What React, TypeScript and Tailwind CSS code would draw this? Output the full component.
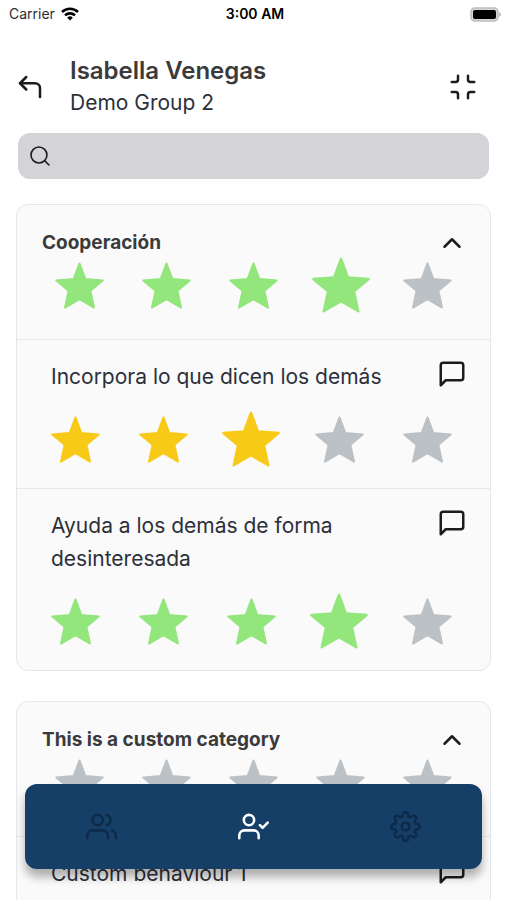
import React, { useState } from 'react';
import {
  FiChevronDown,
  FiChevronUp,
  FiCornerUpLeft,
  FiMessageSquare,
  FiMinimize,
  FiSearch,
  FiSettings,
  FiUserCheck,
  FiUsers,
} from 'react-icons/fi';

interface Behaviour {
  name: string;
  score: number;
}

interface Category {
  name: string;
  score: number;
  behaviours: Behaviour[];
}

const categories: Category[] = [
  {
    name: 'Cooperación',
    score: 4,
    behaviours: [
      { name: 'Incorpora lo que dicen los demás', score: 3 },
      { name: 'Ayuda a los demás de forma desinteresada', score: 4 },
    ],
  },
  {
    name: 'This is a custom category',
    score: 0,
    behaviours: [{ name: 'Custom behaviour 1', score: 0 }],
  },
];

const starColor = (position: number, score: number) => {
  if (position > score) return 'text-[#bbc1c5]';
  return score === 3 ? 'text-[#f8ca18]' : 'text-[#92e67b]';
};

interface StarsProps {
  label: string;
  initial: number;
}

const Stars: React.FC<StarsProps> = ({ label, initial }) => {
  const [score, setScore] = useState(initial);

  return (
    <div className="grid grid-cols-5" role="group" aria-label={label}>
      {[1, 2, 3, 4, 5].map((position) => (
        <button
          key={position}
          type="button"
          aria-label={`${position} / 5`}
          aria-pressed={position === score}
          onClick={() => setScore(position)}
          className={`flex h-14 items-center justify-center ${starColor(position, score)}`}
        >
          <svg
            viewBox="0 0 174 168"
            className={position === score ? 'h-14 w-[58px]' : 'h-[47px] w-[49px]'}
            fill="currentColor"
            stroke="currentColor"
            strokeWidth="7"
            strokeLinejoin="round"
          >
            <path d="M87 5 L108 61 L170 66 L126 103 L139 163 L87 133 L35 163 L48 103 L4 66 L66 61 Z" />
          </svg>
        </button>
      ))}
    </div>
  );
};

const BehaviourRow: React.FC<{ behaviour: Behaviour }> = ({ behaviour }) => (
  <li className="border-t border-[#e6e8ea] pt-[19px] pb-[21px]">
    <div className="flex items-start justify-between pl-[34px] pr-[23px]">
      <p className="max-w-[340px] pt-px text-[21px] leading-[33px] text-[#2b303b]">{behaviour.name}</p>
      <button type="button" aria-label="Comment" className="text-[#1c1c1e]">
        <FiMessageSquare size={30} />
      </button>
    </div>
    <div className="mt-[18px] pl-[14px] pr-[19px]">
      <Stars label={behaviour.name} initial={behaviour.score} />
    </div>
  </li>
);

const CategoryCard: React.FC<{ category: Category }> = ({ category }) => {
  const [open, setOpen] = useState(true);

  return (
    <section className="rounded-xl border border-[#e6e7e9] bg-[#fafafa]">
      <div className="pt-[23px] pb-[26px]">
        <div className="flex h-[29px] items-center justify-between pl-[25px] pr-[23px]">
          <h2 className="text-[19px] leading-7 font-bold text-[#3a3a3c]">{category.name}</h2>
          <button
            type="button"
            aria-label={category.name}
            aria-expanded={open}
            onClick={() => setOpen(!open)}
            className="text-[#1c1c1e]"
          >
            {open ? <FiChevronUp size={30} /> : <FiChevronDown size={30} />}
          </button>
        </div>
        <div className="px-[19px]">
          <Stars label={category.name} initial={category.score} />
        </div>
      </div>
      {open && (
        <ul>
          {category.behaviours.map((behaviour) => (
            <BehaviourRow key={behaviour.name} behaviour={behaviour} />
          ))}
        </ul>
      )}
    </section>
  );
};

const StatusBar: React.FC = () => (
  <div className="grid h-7 grid-cols-3 items-center pl-[9px] pr-[6px] text-sm text-black">
    <div className="flex items-center gap-[6px]">
      <span className="text-[#2c2c2e]">Carrier</span>
      <svg viewBox="0 0 18 14" className="h-[14px] w-[18px]" fill="none" stroke="currentColor" strokeWidth="2.6">
        <path d="M1 5 A11.5 11.5 0 0 1 17 5" />
        <path d="M4 8.4 A7.2 7.2 0 0 1 14 8.4" />
        <path d="M9 13.6 L6.2 10.7 A4 4 0 0 1 11.8 10.7 Z" fill="currentColor" stroke="none" />
      </svg>
    </div>
    <span className="text-center font-semibold">3:00 AM</span>
    <svg viewBox="0 0 31 15" className="h-[15px] w-[31px] justify-self-end">
      <rect x="1" y="1" width="27" height="13" rx="4" fill="#d6d6d6" stroke="#bdbdbd" strokeWidth="1.6" />
      <rect x="3" y="3" width="23" height="9" rx="2" fill="#000" />
      <path d="M29.2 5.2 Q31 6 31 7.5 Q31 9 29.2 9.8 Z" fill="#b4b4b4" />
    </svg>
  </div>
);

const App: React.FC = () => {
  const [query, setQuery] = useState('');

  return (
    <div className="relative flex h-screen flex-col overflow-hidden bg-white font-['Inter','Liberation_Sans',sans-serif]">
      <StatusBar />

      <header className="flex items-center pt-[27px] pl-[15px] pr-[29px]">
        <button type="button" aria-label="Back" className="text-[#1c1c1e]">
          <FiCornerUpLeft size={30} />
        </button>
        <div className="ml-[25px] flex-1">
          <h1 className="text-2xl leading-8 font-semibold text-[#3a3a3c]">Isabella Venegas</h1>
          <p className="text-[21px] leading-8 text-[#2b303b]">Demo Group 2</p>
        </div>
        <button type="button" aria-label="Collapse all" className="text-[#1c1c1e]">
          <FiMinimize size={30} />
        </button>
      </header>

      <label className="mx-[18px] mt-[14px] flex h-[46px] shrink-0 items-center gap-3 rounded-xl bg-[#d4d3d8] px-[10px]">
        <FiSearch size={26} strokeWidth={1.6} className="text-[#1c1c1e]" />
        <input
          type="search"
          aria-label="Search"
          value={query}
          onChange={(e) => setQuery(e.target.value)}
          className="w-full bg-transparent text-lg text-[#2b303b] outline-none"
        />
      </label>

      <main className="mt-[25px] flex flex-1 flex-col gap-[30px] overflow-y-auto px-4 pb-32 [scrollbar-width:none]">
        {categories
          .filter((category) => category.name.toLowerCase().includes(query.toLowerCase()))
          .map((category) => (
            <CategoryCard key={category.name} category={category} />
          ))}
      </main>

      <nav className="absolute inset-x-[25px] bottom-[31px] grid h-[85px] grid-cols-3 rounded-xl bg-[#163f68] shadow-[0_8px_10px_rgba(0,0,0,0.3)]">
        <button type="button" aria-label="Groups" className="flex items-center justify-center text-[#0c2b4b]">
          <FiUsers size={31} />
        </button>
        <button type="button" aria-label="Evaluate" aria-current="page" className="flex items-center justify-center text-white">
          <FiUserCheck size={31} />
        </button>
        <button type="button" aria-label="Settings" className="flex items-center justify-center text-[#0c2b4b]">
          <FiSettings size={31} />
        </button>
      </nav>
    </div>
  );
};

export default App;
